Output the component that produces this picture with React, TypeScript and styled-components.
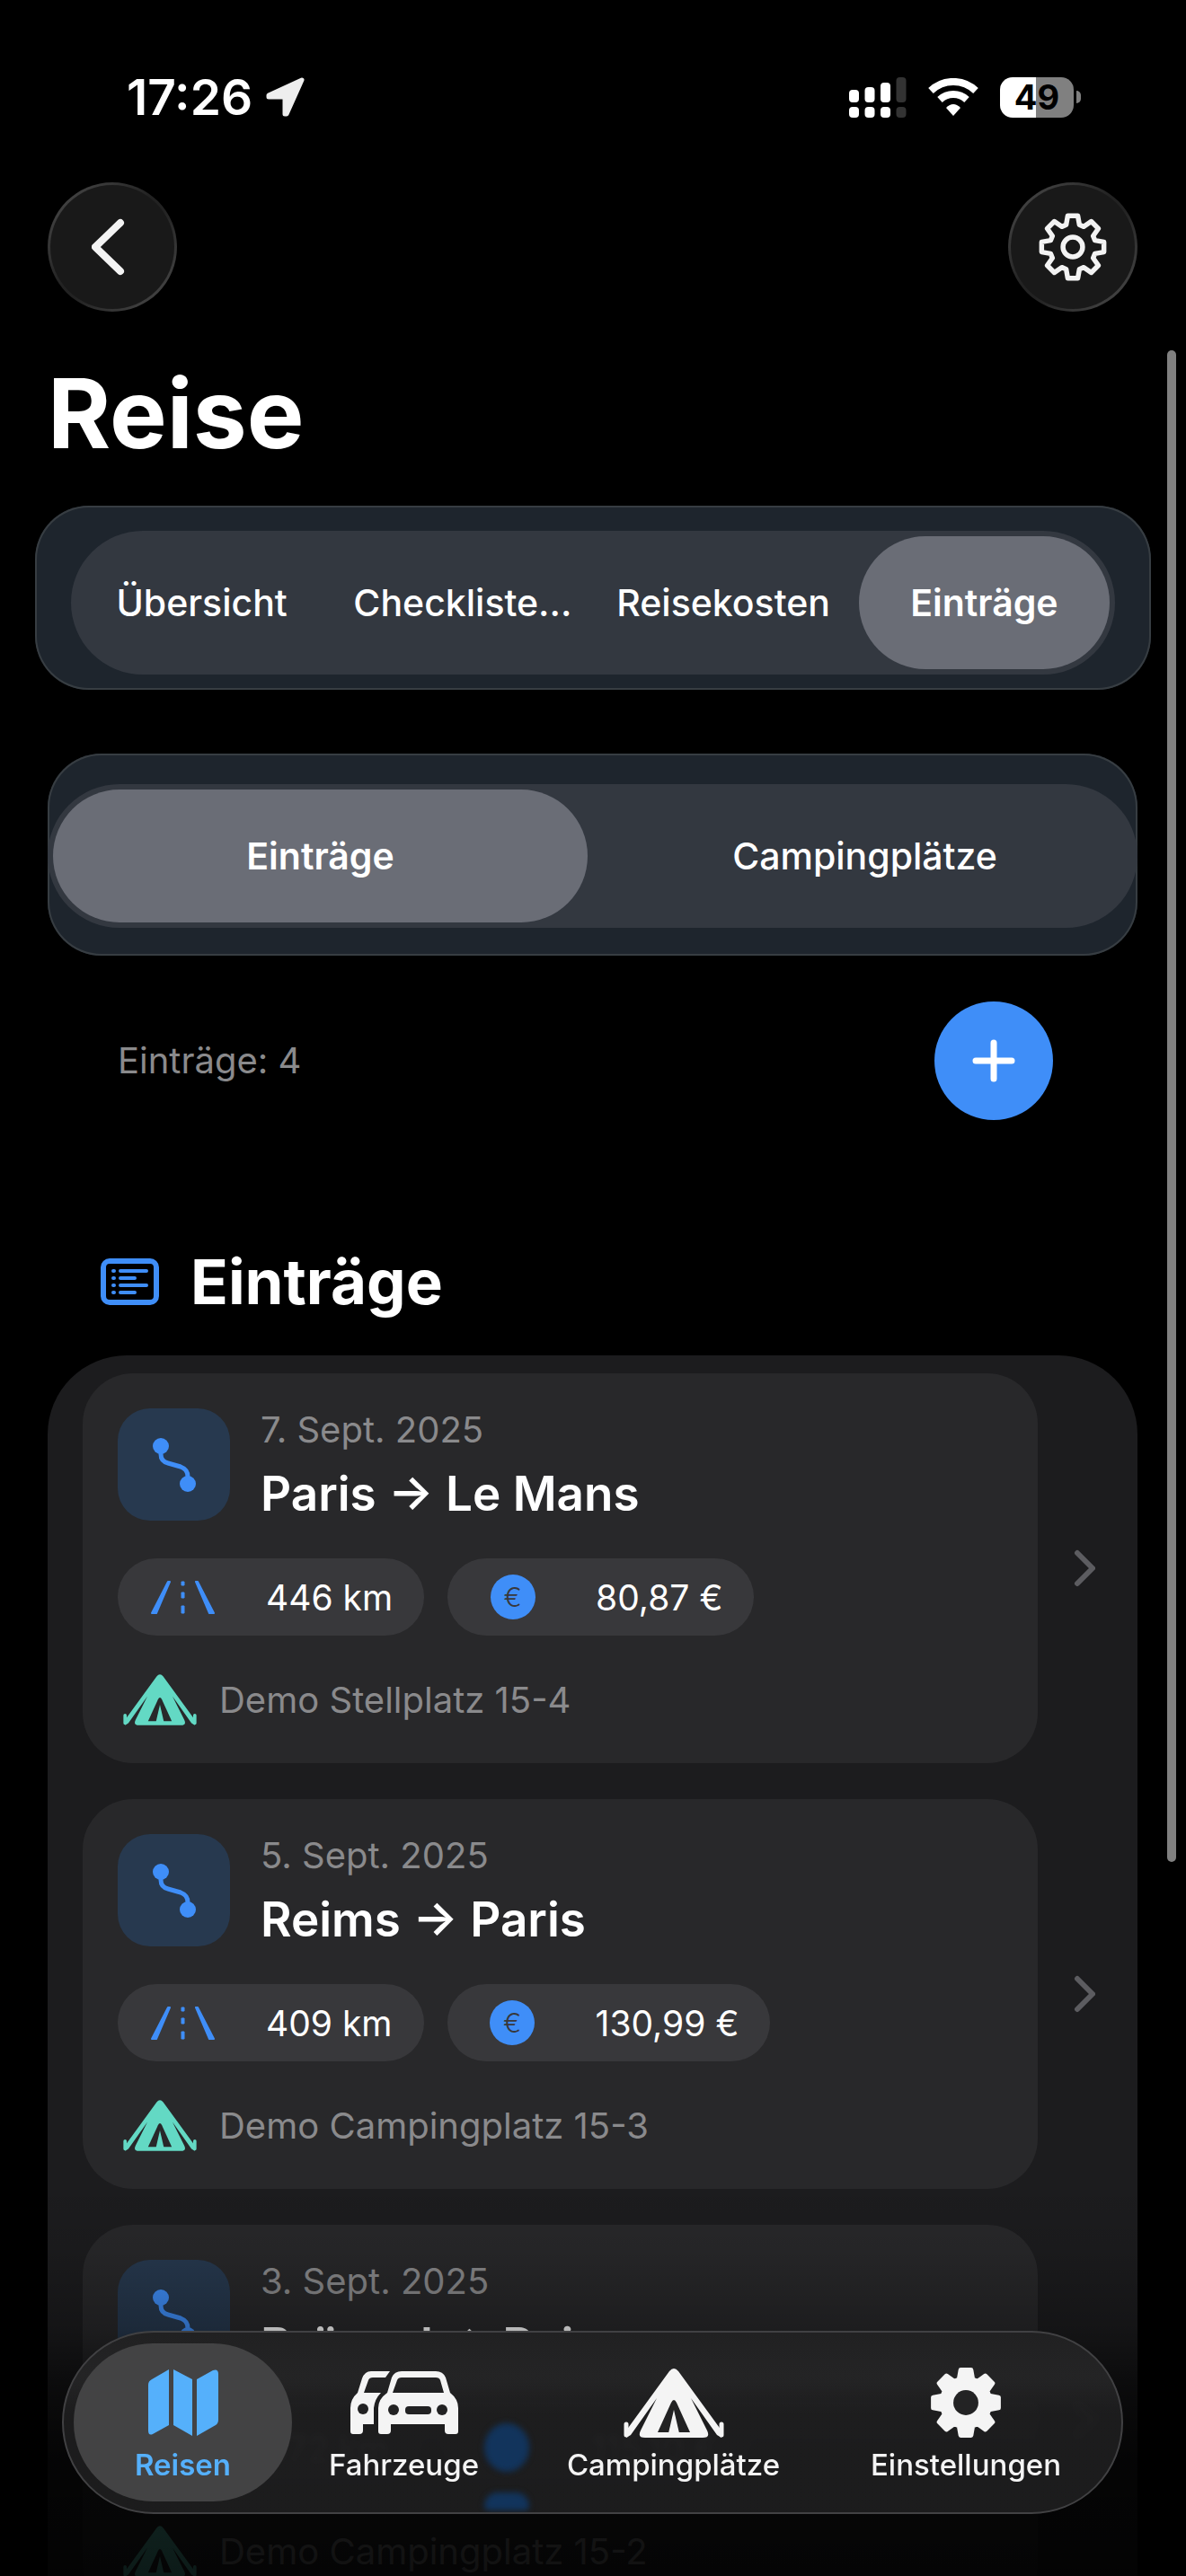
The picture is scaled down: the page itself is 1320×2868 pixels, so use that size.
import React from "react";
import styled, { createGlobalStyle } from "styled-components";

const color = {
  blue: "#3f8ef8",
  mint: "#63d9c4",
  white: "#ffffff",
  muted: "#8a8a8c",
};

const Global = createGlobalStyle`
  * { box-sizing: border-box; }
  body {
    margin: 0;
    background: #000;
    color: ${color.white};
    font-family: Inter, "Liberation Sans", sans-serif;
  }
  button { font: inherit; color: inherit; border: 0; padding: 0; background: none; }
  a { color: inherit; text-decoration: none; }
  svg { display: block; flex: none; }
  h1, h2, h3, p, ul { margin: 0; padding: 0; }
  ul { list-style: none; }
`;

const Screen = styled.div`
  position: relative;
  height: 100vh;
  overflow: hidden;
  background: #000;
`;

const StatusBar = styled.header`
  display: flex;
  align-items: center;
  justify-content: space-between;
  height: 130px;
  padding: 86px 117px 0 141px;
`;

const StatusGroup = styled.div<{ $gap: number }>`
  display: flex;
  align-items: center;
  gap: ${(p) => p.$gap}px;
`;

const Clock = styled.time`
  font-size: 55px;
  font-weight: 600;
  line-height: 44px;
`;

const Battery = styled.div`
  display: flex;
  align-items: center;
  gap: 3px;
`;

const BatteryBody = styled.div`
  display: grid;
  place-items: center;
  width: 82px;
  height: 45px;
  border-radius: 14px;
  background: linear-gradient(90deg, #fff 49%, #808080 49%);
  color: #000;
  font-size: 38px;
  font-weight: 700;
  line-height: 45px;
`;

const BatteryTip = styled.span`
  width: 5px;
  height: 14px;
  border-radius: 0 5px 5px 0;
  background: #808080;
`;

const Toolbar = styled.div`
  display: flex;
  justify-content: space-between;
  padding: 73px 54px 0 53px;
`;

const RoundButton = styled.button`
  display: grid;
  place-items: center;
  width: 144px;
  height: 144px;
  border: 3px solid transparent;
  border-radius: 50%;
  background:
    linear-gradient(#191919, #191919) padding-box,
    linear-gradient(135deg, #444 10%, #222 45%, #222 55%, #444 90%) border-box;
`;

const Title = styled.h1`
  padding: 49px 53px 0;
  font-size: 107px;
  font-weight: 700;
  line-height: 128px;
`;

const SegmentPanel = styled.div<{ $inset?: boolean }>`
  margin: ${(p) => (p.$inset ? "71px 54px 0 53px" : "39px 39px 0")};
  padding: ${(p) => (p.$inset ? "34px 0 31px" : "28px 40px 17px")};
  border-radius: 60px;
  background: #1e252d;
  box-shadow: inset 0 0 0 2px #373d42;
`;

const SegmentTrack = styled.div<{ $columns: number }>`
  display: grid;
  grid-template-columns: repeat(${(p) => p.$columns}, minmax(0, 1fr));
  gap: 11px;
  padding: 6px;
  border-radius: 80px;
  background: #333840;
`;

const Segment = styled.button<{ $active?: boolean }>`
  height: 148px;
  border-radius: 74px;
  background: ${(p) => (p.$active ? "#6a6d76" : "transparent")};
  color: #fff;
  font-size: 41px;
  font-weight: ${(p) => (p.$active ? 600 : 500)};
  white-space: nowrap;
`;

const CountRow = styled.div`
  display: flex;
  align-items: center;
  justify-content: space-between;
  padding: 51px 148px 0 131px;
`;

const Muted = styled.p`
  color: ${color.muted};
  font-size: 40px;
  line-height: 48px;
`;

const AddButton = styled.button`
  display: grid;
  place-items: center;
  width: 132px;
  height: 132px;
  border-radius: 50%;
  background: ${color.blue};
`;

const SectionHead = styled.div`
  display: flex;
  align-items: center;
  gap: 35px;
  padding: 138px 112px 0;
`;

const SectionTitle = styled.h2`
  font-size: 69px;
  font-weight: 700;
  line-height: 84px;
`;

const List = styled.ul`
  display: flex;
  flex-direction: column;
  gap: 40px;
  margin: 40px 54px 0 53px;
  padding: 20px 47px 200px 39px;
  border-radius: 88px 88px 0 0;
  background: #1c1c1e;
`;

const Row = styled.a`
  display: flex;
  align-items: center;
  justify-content: space-between;
  gap: 39px;
`;

const Card = styled.article`
  display: flex;
  flex: 1;
  flex-direction: column;
  align-items: flex-start;
  height: 434px;
  padding: 39px;
  border-radius: 56px;
  background: #28282a;
`;

const CardHead = styled.div`
  display: flex;
  gap: 34px;
`;

const Tile = styled.div`
  display: grid;
  place-items: center;
  width: 125px;
  height: 125px;
  border-radius: 36px;
  background: #27394f;
`;

const RouteTitle = styled.h3`
  padding-top: 13px;
  font-size: 53px;
  font-weight: 600;
  line-height: 68px;
`;

const Chips = styled.div`
  display: flex;
  gap: 26px;
  padding-top: 38px;
`;

const Chip = styled.div`
  display: flex;
  align-items: center;
  gap: 57px;
  height: 86px;
  padding: 0 35px 0 37px;
  border-radius: 43px;
  background: #38383b;
  font-size: 39px;
`;

const ChipIcon = styled.span`
  display: grid;
  place-items: center;
  width: 71px;
`;

const EuroBadge = styled.span`
  display: grid;
  place-items: center;
  width: 50px;
  height: 50px;
  border-radius: 50%;
  background: ${color.blue};
  color: #38383b;
  font-size: 30px;
  font-weight: 300;
  line-height: 50px;
`;

const Place = styled.div`
  display: flex;
  align-items: center;
  gap: 25px;
  padding: 43px 6px 0;
  color: ${color.mint};
`;

const Scrollbar = styled.span`
  position: absolute;
  top: 390px;
  right: 11px;
  width: 10px;
  height: 1683px;
  border-radius: 5px;
  background: #808080;
`;

const Fade = styled.div`
  position: absolute;
  inset: auto 0 0;
  height: 440px;
  background: linear-gradient(
    transparent,
    rgba(0, 0, 0, 0.08) 18%,
    rgba(0, 0, 0, 0.27) 37%,
    rgba(0, 0, 0, 0.6) 52%,
    rgba(0, 0, 0, 0.82) 70%,
    rgba(0, 0, 0, 0.88)
  );
`;

const TabBar = styled.nav`
  position: absolute;
  inset: auto 70px 69px 69px;
  display: grid;
  grid-template-columns: 243fr 249fr 351fr 300fr;
  padding: 12px 23px 12px 11px;
  border: 2px solid #414143;
  border-radius: 102px;
  background: linear-gradient(#212122, #242425 25%, rgba(31, 31, 32, 0.9) 45%);
  backdrop-filter: blur(3px);
  overflow: hidden;
`;

const Tab = styled.a<{ $active?: boolean }>`
  position: relative;
  display: flex;
  flex-direction: column;
  align-items: center;
  gap: 8px;
  height: 176px;
  padding-top: 25px;
  border-radius: 88px;
  background: ${(p) => (p.$active ? "#434344" : "transparent")};
  color: ${(p) => (p.$active ? "#55b0fb" : "#f4f4f4")};
  font-size: 33px;
  font-weight: ${(p) => (p.$active ? 600 : 500)};
  line-height: 40px;
`;

const TabIcon = styled.span`
  display: grid;
  place-items: center;
  height: 82px;
`;

const GlassGlow = styled.div`
  position: absolute;
  inset: 101px auto 2px 468px;
  display: flex;
  flex-direction: column;
  justify-content: space-between;
  filter: blur(3px);
`;

const GlowDot = styled.span<{ $edge?: boolean }>`
  width: 50px;
  height: ${(p) => (p.$edge ? 20 : 54)}px;
  border-radius: ${(p) => (p.$edge ? "25px 25px 8px 8px" : "50%")};
  background: #12345c;
`;

const gearPoints = (): string => {
  const pts: string[] = [];
  for (let i = 0; i < 8; i++) {
    const base = (i * Math.PI) / 4 - Math.PI / 2;
    const add = (a: number, r: number) =>
      pts.push(`${(50 + r * Math.cos(base + a)).toFixed(2)},${(50 + r * Math.sin(base + a)).toFixed(2)}`);
    add(-0.29, 33);
    add(-0.16, 45);
    add(0.16, 45);
    add(0.29, 33);
  }
  return pts.join(" ");
};

const GearOutline = () => (
  <svg width="78" height="78" viewBox="0 0 100 100" fill="none" stroke="#f3f3f3" strokeWidth="7" strokeLinejoin="round">
    <polygon points={gearPoints()} />
    <circle cx="50" cy="50" r="14" />
  </svg>
);

const GearSolid = () => (
  <svg width="82" height="82" viewBox="0 0 100 100">
    <polygon points={gearPoints()} fill="currentColor" stroke="currentColor" strokeWidth="6" strokeLinejoin="round" />
    <circle cx="50" cy="50" r="17" fill="#232324" />
  </svg>
);

const Tent = ({ width, hole }: { width: number; hole: string }) => (
  <svg width={width} height={Math.round(width * 0.69)} viewBox="0 0 112 77" fill="currentColor">
    <path d="M51 3L3 69v8l5-3L37 33 19 69q-4 8 5 8h64q9 0 5-8L75 33l29 41 5 3v-8L61 3q-5-6-10 0z" />
    <path d="M3 62v12M109 62v12" stroke="currentColor" strokeWidth="5" strokeLinecap="round" />
    <path d="M53 38q3-6 6 0l15 33H38z" fill={hole} />
    <path d="M56 46l-6 26h12z" />
  </svg>
);

const Cars = () => (
  <svg width="122" height="71" viewBox="0 0 122 71">
    <g fill="currentColor" fillRule="evenodd">
      <path d="M58 0h38q8 0 11 7l5 17q9 7 9 17v26q0 3-3 3h-8q-4 0-4-4v-7H46v7q0 4-4 4h-7q-3 0-3-3V41q0-10 10-17l5-17q3-7 11-7zm0 7q-4 0-5 3l-5 14h57l-4-14q-1-3-5-3z" />
      <path d="M24 0h21l-5 7H26q-4 0-5 3l-5 14h19q-7 7-8 17v18H15v7q0 4-4 4H4q-3 0-3-3V41Q1 31 9 24l5-16q3-8 10-8z" />
    </g>
    <g fill="#222223">
      <circle cx="15" cy="42" r="6" />
      <circle cx="49" cy="43" r="6" />
      <circle cx="103" cy="43" r="6" />
      <rect x="62" y="39" width="29" height="9" rx="4" />
    </g>
  </svg>
);

const MapIcon = () => (
  <svg width="78" height="74" viewBox="0 0 78 74" fill="currentColor">
    <path d="M23 0v62L5 72q-5 2-5-4V17q0-4 4-6zM28 0l21 11v63L28 62zM54 11L72 1q6-2 6 4v51q0 4-3 6L54 74z" />
  </svg>
);

const Road = () => (
  <svg width="71" height="37" viewBox="0 0 71 37" fill={color.blue} stroke={color.blue} strokeLinejoin="round" strokeWidth="2">
    <path d="M19 1h2L6 36H1zM50 1h2l18 35h-5z" />
    <path d="M34 1h3v4h-3zM34 13h3v6h-3zM34 28h3v8h-3z" strokeWidth="1" />
  </svg>
);

const RouteIcon = () => (
  <svg width="50" height="60" viewBox="0 0 50 60" fill={color.blue}>
    <circle cx="10" cy="9" r="9" />
    <circle cx="40" cy="51" r="9" />
    <path d="M10 10v8q0 8 8 10l14 4q8 3 8 11v6" fill="none" stroke={color.blue} strokeWidth="5" />
  </svg>
);

const Signal = () => (
  <svg width="64" height="45" viewBox="0 0 64 45">
    {[14, 11, 6, 0].map((top, i) => (
      <g key={top} fill={i === 3 ? "#333" : "#fff"}>
        <rect x={i * 18 - i / 2} y={top} width="11" height={28 - top} rx="4" />
        <rect x={i * 18 - i / 2} y="33" width="11" height="12" rx="4" />
      </g>
    ))}
  </svg>
);

const Wifi = () => (
  <svg width="56" height="42" viewBox="0 0 56 42" fill="none" stroke="#fff">
    <path d="M3 14a36 36 0 0 1 50 0M13 24a22 22 0 0 1 30 0" strokeWidth="8" />
    <path d="M28 42l-8-9q8-8 16 0z" fill="#fff" stroke="none" />
  </svg>
);

type Entry = { date: string; route: string; km: string; cost: string; place: string };

const entries: Entry[] = [
  { date: "7. Sept. 2025", route: "Paris → Le Mans", km: "446 km", cost: "80,87 €", place: "Demo Stellplatz 15-4" },
  { date: "5. Sept. 2025", route: "Reims → Paris", km: "409 km", cost: "130,99 €", place: "Demo Campingplatz 15-3" },
  { date: "3. Sept. 2025", route: "Brüssel → Reims", km: "372 km", cost: "115,10 €", place: "Demo Campingplatz 15-2" },
];

const EntryRow = ({ entry }: { entry: Entry }) => (
  <li>
    <Row href="#eintrag">
      <Card>
        <CardHead>
          <Tile><RouteIcon /></Tile>
          <div>
            <Muted>{entry.date}</Muted>
            <RouteTitle>{entry.route}</RouteTitle>
          </div>
        </CardHead>
        <Chips>
          <Chip><ChipIcon><Road /></ChipIcon>{entry.km}</Chip>
          <Chip><ChipIcon><EuroBadge>€</EuroBadge></ChipIcon>{entry.cost}</Chip>
        </Chips>
        <Place>
          <Tent width={82} hole="#28282a" />
          <Muted>{entry.place}</Muted>
        </Place>
      </Card>
      <svg width="25" height="42" viewBox="0 0 25 42" fill="none" stroke="#5c5c60" strokeWidth="6" strokeLinecap="round" strokeLinejoin="round">
        <path d="M5 4l17 17L5 38" />
      </svg>
    </Row>
  </li>
);

export default function App() {
  return (
    <Screen>
      <Global />
      <StatusBar>
        <StatusGroup $gap={15}>
          <Clock>17:26</Clock>
          <svg width="43" height="44" viewBox="0 0 43 44" fill="#eee" stroke="#eee" strokeWidth="5" strokeLinejoin="round">
            <path d="M40 3L3 20v2h18v19h2z" />
          </svg>
        </StatusGroup>
        <StatusGroup $gap={24}>
          <Signal />
          <Wifi />
          <Battery>
            <BatteryBody>49</BatteryBody>
            <BatteryTip />
          </Battery>
        </StatusGroup>
      </StatusBar>
      <Toolbar>
        <RoundButton aria-label="Zurück">
          <svg width="46" height="64" viewBox="0 0 46 64" fill="none" stroke="#f3f3f3" strokeWidth="8" strokeLinecap="round" strokeLinejoin="round">
            <path d="M32 5L4 32l28 27" />
          </svg>
        </RoundButton>
        <RoundButton aria-label="Einstellungen"><GearOutline /></RoundButton>
      </Toolbar>
      <main>
        <Title>Reise</Title>
        <SegmentPanel>
          <SegmentTrack $columns={4}>
            <Segment>Übersicht</Segment>
            <Segment>Checkliste...</Segment>
            <Segment>Reisekosten</Segment>
            <Segment $active>Einträge</Segment>
          </SegmentTrack>
        </SegmentPanel>
        <SegmentPanel $inset>
          <SegmentTrack $columns={2}>
            <Segment $active>Einträge</Segment>
            <Segment>Campingplätze</Segment>
          </SegmentTrack>
        </SegmentPanel>
        <CountRow>
          <Muted>Einträge: 4</Muted>
          <AddButton aria-label="Hinzufügen">
            <svg width="48" height="48" viewBox="0 0 48 48" stroke="#fff" strokeWidth="7" strokeLinecap="round">
              <path d="M24 4v40M4 24h40" />
            </svg>
          </AddButton>
        </CountRow>
        <SectionHead>
          <svg width="65" height="52" viewBox="0 0 65 52" fill="none" stroke={color.blue} strokeLinecap="round">
            <rect x="3" y="3" width="59" height="46" rx="7" strokeWidth="6" />
            <path d="M22 14h29M22 22h16M22 30h29M22 38h16" strokeWidth="4" />
            <path d="M14 14h1M14 22h1M14 30h1M14 38h1" strokeWidth="4" />
          </svg>
          <SectionTitle>Einträge</SectionTitle>
        </SectionHead>
        <List>
          {entries.map((entry) => <EntryRow key={entry.date} entry={entry} />)}
        </List>
      </main>
      <Scrollbar />
      <Fade />
      <TabBar>
        <GlassGlow>
          <GlowDot />
          <GlowDot $edge />
        </GlassGlow>
        <Tab href="#reisen" $active><TabIcon><MapIcon /></TabIcon>Reisen</Tab>
        <Tab href="#fahrzeuge"><TabIcon><Cars /></TabIcon>Fahrzeuge</Tab>
        <Tab href="#campingplaetze"><TabIcon><Tent width={112} hole="#222223" /></TabIcon>Campingplätze</Tab>
        <Tab href="#einstellungen"><TabIcon><GearSolid /></TabIcon>Einstellungen</Tab>
      </TabBar>
    </Screen>
  );
}
